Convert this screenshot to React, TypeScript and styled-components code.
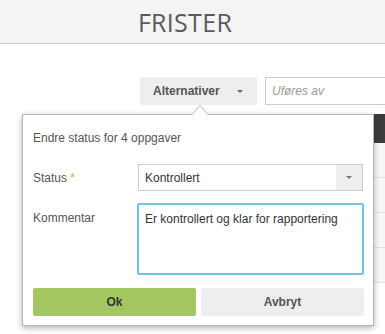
import styled, { createGlobalStyle } from "styled-components";

const GlobalStyle = createGlobalStyle`
  html {
    overflow: hidden;
  }
  body {
    margin: 0;
    min-height: 100vh;
    background: #ffffff;
    font-family: "Liberation Sans", Arial, sans-serif;
    font-size: 12px;
    color: #555;
  }
  * {
    box-sizing: border-box;
  }
`;

const Header = styled.header`
  height: 44px;
  background-color: #f4f4f4;
  border-bottom: 1px solid #cccccc;
  display: flex;
  align-items: center;
  justify-content: center;
  padding-right: 15px;
`;

const Title = styled.h1`
  margin: 0;
  font-family: "Open Sans", sans-serif;
  font-weight: 400;
  font-size: 25px;
  color: #5a5a5a;
  letter-spacing: 0.3px;
`;

const Main = styled.div`
  position: relative;
  padding-top: 33px;
`;

const Toolbar = styled.div`
  display: flex;
  gap: 8px;
  padding-left: 140px;
  height: 28px;
`;

const MenuButton = styled.button`
  flex-shrink: 0;
  display: flex;
  align-items: center;
  width: 117px;
  height: 28px;
  padding: 0 0 0 13px;
  border: none;
  border-radius: 2px;
  background-color: #eeeeee;
  font-family: "Liberation Sans", Arial, sans-serif;
  font-size: 12px;
  font-weight: bold;
  color: #555;
`;

const Caret = styled.span<{ $color?: string }>`
  display: inline-block;
  width: 0;
  height: 0;
  border-left: 3px solid transparent;
  border-right: 3px solid transparent;
  border-top: 3px solid ${(p) => p.$color ?? "#666"};
`;

const MenuCaret = styled(Caret)`
  margin-left: auto;
  margin-right: 14px;
`;

const SearchInput = styled.input`
  flex: 1;
  min-width: 0;
  height: 28px;
  border: 1px solid #cccccc;
  border-right: none;
  padding: 0 6px;
  font-family: "Liberation Sans", Arial, sans-serif;
  font-size: 12px;
  outline: none;

  &::placeholder {
    color: #999;
    font-style: italic;
  }
`;

const Table = styled.div`
  margin: 9px 0 0 200px;
`;

const TableHead = styled.div`
  height: 29px;
  background-color: #3c3c3c;
`;

const TableRow = styled.div`
  height: 35px;
  background-color: #f8f8f8;
  border-bottom: 1px solid #e2e2e2;
`;

const Popover = styled.div`
  position: absolute;
  left: 22px;
  top: 70px;
  width: 352px;
  background: #ffffff;
  border: 1px solid #b5b5b5;
  box-shadow: 0 2px 6px rgba(0, 0, 0, 0.3);
  padding: 14px 10px 9px 10px;

  &::before,
  &::after {
    content: "";
    position: absolute;
    left: 168px;
    width: 0;
    height: 0;
    border-left: 9px solid transparent;
    border-right: 9px solid transparent;
  }
  &::before {
    top: -10px;
    border-bottom: 10px solid #b5b5b5;
  }
  &::after {
    top: -9px;
    left: 169px;
    border-left-width: 8px;
    border-right-width: 8px;
    border-bottom: 9px solid #ffffff;
  }
`;

const PopoverTitle = styled.div`
  line-height: 18px;
  margin-bottom: 17px;
`;

const FormRow = styled.div<{ $top?: boolean }>`
  display: grid;
  grid-template-columns: 105px 225px;
  align-items: ${(p) => (p.$top ? "start" : "center")};
  margin-bottom: 13px;
`;

const Label = styled.label<{ $offset?: number }>`
  line-height: 18px;
  padding-top: ${(p) => p.$offset ?? 0}px;
`;

const Required = styled.span`
  color: #f0a030;
`;

const Select = styled.div`
  display: flex;
  height: 27px;
  border: 1px solid #cccccc;
  color: #333;
`;

const SelectValue = styled.div`
  flex: 1;
  display: flex;
  align-items: center;
  padding-left: 6px;
`;

const SelectToggle = styled.div`
  width: 26px;
  display: flex;
  align-items: center;
  justify-content: center;
  background-color: #eeeeee;
`;

const TextArea = styled.textarea`
  display: block;
  width: 227px;
  height: 72px;
  margin-left: -1px;
  margin-top: -1px;
  padding: 6px 6px;
  border: 2px solid #6cc5e6;
  border-radius: 2px;
  resize: none;
  outline: none;
  font-family: "Liberation Sans", Arial, sans-serif;
  font-size: 12px;
  line-height: 16px;
  color: #333;
`;

const Buttons = styled.div`
  display: grid;
  grid-template-columns: 163px 163px;
  gap: 5px;
`;

const ActionButton = styled.button<{ $primary?: boolean }>`
  height: 28px;
  border: none;
  border-radius: 2px;
  background-color: ${(p) => (p.$primary ? "#a3c660" : "#eeeeee")};
  color: ${(p) => (p.$primary ? "#333" : "#555")};
  font-family: "Liberation Sans", Arial, sans-serif;
  font-size: 12px;
  font-weight: bold;
`;

export default function App() {
  return (
    <>
      <GlobalStyle />
      <Header>
        <Title>FRISTER</Title>
      </Header>
      <Main>
        <Toolbar>
          <MenuButton>
            Alternativer
            <MenuCaret />
          </MenuButton>
          <SearchInput placeholder="Uføres av" />
        </Toolbar>
        <Table>
          <TableHead />
          <TableRow />
          <TableRow />
          <TableRow />
          <TableRow />
        </Table>
        <Popover>
          <PopoverTitle>Endre status for 4 oppgaver</PopoverTitle>
          <FormRow>
            <Label>
              Status <Required>*</Required>
            </Label>
            <Select>
              <SelectValue>Kontrollert</SelectValue>
              <SelectToggle>
                <Caret $color="#777" />
              </SelectToggle>
            </Select>
          </FormRow>
          <FormRow $top>
            <Label $offset={5}>Kommentar</Label>
            <TextArea defaultValue="Er kontrollert og klar for rapportering" />
          </FormRow>
          <Buttons>
            <ActionButton $primary>Ok</ActionButton>
            <ActionButton>Avbryt</ActionButton>
          </Buttons>
        </Popover>
      </Main>
    </>
  );
}
